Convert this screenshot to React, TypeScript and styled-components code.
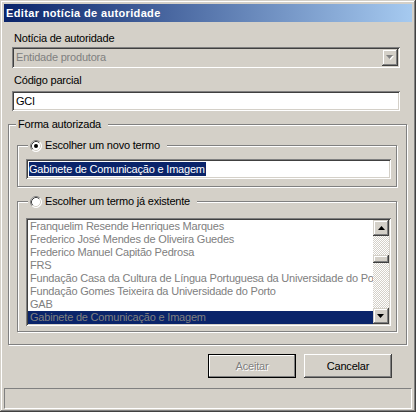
import React from "react";
import styled, { createGlobalStyle } from "styled-components";

const face = "#d4d0c8";
const light = "#ffffff";
const shadow = "#808080";
const dark = "#404040";
const navy = "#0a246a";

const GlobalStyle = createGlobalStyle`
  html, body { margin: 0; padding: 0; background: ${face}; }
  body { font-family: "Liberation Sans", Arial, sans-serif; font-size: 11px; letter-spacing: -0.2px; color: #000; }
  * { box-sizing: border-box; }
`;

const Window = styled.div`
  width: 416px;
  height: 412px;
  display: flex;
  flex-direction: column;
  padding: 4px 4px 3px 4px;
  background: ${face};
  box-shadow: inset -1px -1px ${dark}, inset 1px 1px ${face}, inset -2px -2px ${shadow}, inset 2px 2px ${light};
`;

const TitleBar = styled.div`
  height: 18px;
  flex: none;
  padding-left: 2px;
  background: linear-gradient(to right, ${navy}, #a6caf0);
  color: #fff;
  font-weight: bold;
  letter-spacing: 0.35px;
  line-height: 18px;
  white-space: nowrap;
`;

const Body = styled.div`
  flex: 1;
  display: flex;
  flex-direction: column;
  padding: 0 4px;
`;

const Label = styled.div<{ $top: number }>`
  margin: ${(p) => p.$top}px 0 0 6px;
  line-height: 13px;
  height: 13px;
  white-space: nowrap;
`;

const Sunken = styled.div<{ $top: number; $h: number; $bg: string }>`
  margin: ${(p) => p.$top}px 8px 0 4px;
  height: ${(p) => p.$h}px;
  background: ${(p) => p.$bg};
  padding: 2px;
  display: flex;
  align-items: stretch;
  box-shadow: inset 1px 1px ${shadow}, inset -1px -1px ${light}, inset 2px 2px ${dark}, inset -2px -2px ${face};
`;

const FieldText = styled.div<{ $disabled?: boolean }>`
  flex: 1;
  padding-left: 2px;
  line-height: 17px;
  color: ${(p) => (p.$disabled ? shadow : "#000")};
  white-space: nowrap;
  overflow: hidden;
`;

const Raised = styled.div`
  width: 16px;
  flex: none;
  background: ${face};
  display: flex;
  align-items: center;
  justify-content: center;
  box-shadow: inset -1px -1px ${dark}, inset 1px 1px ${face}, inset -2px -2px ${shadow}, inset 2px 2px ${light};
`;

const DropArrow = ({ disabled }: { disabled?: boolean }) => (
  <svg width="8" height="5" viewBox="0 0 8 5">
    {disabled && <path d="M1 1h7l-3.5 4z" fill={light} />}
    <path d="M0 0h7l-3.5 4z" fill={disabled ? shadow : "#000"} />
  </svg>
);

const UpArrow = () => (
  <svg width="7" height="4" viewBox="0 0 7 4">
    <path d="M3.5 0L7 4H0z" fill="#000" />
  </svg>
);

const GroupBox = styled.div<{ $top: number; $side: number; $pb: number }>`
  margin: ${(p) => p.$top}px ${(p) => p.$side + 1}px 0 ${(p) => p.$side}px;
  border: 1px solid ${shadow};
  box-shadow: inset 1px 1px ${light}, 1px 1px ${light};
  padding-bottom: ${(p) => p.$pb}px;
  display: flex;
  flex-direction: column;
`;

const Legend = styled.div<{ $left: number }>`
  align-self: flex-start;
  margin: -7px 0 0 ${(p) => p.$left}px;
  padding: 0 7px 0 2px;
  height: 13px;
  line-height: 13px;
  background: ${face};
  display: flex;
  align-items: center;
  gap: 3px;
  white-space: nowrap;
`;

const Inset = styled.div<{ $top: number; $h: number }>`
  margin: ${(p) => p.$top}px 5px 0 8px;
  height: ${(p) => p.$h}px;
  background: #fff;
  padding: 2px;
  display: flex;
  box-shadow: inset 1px 1px ${shadow}, inset -1px -1px ${light}, inset 2px 2px ${dark}, inset -2px -2px ${face};
`;

const Highlight = styled.span`
  align-self: center;
  margin-left: 1px;
  background: ${navy};
  color: #fff;
  line-height: 14px;
  padding-right: 1px;
  white-space: nowrap;
`;

const Items = styled.div`
  flex: 1;
  min-width: 0;
  overflow: hidden;
  display: flex;
  flex-direction: column;
`;

const Item = styled.div<{ $selected?: boolean }>`
  height: 13px;
  line-height: 13px;
  padding-left: 2px;
  white-space: nowrap;
  color: ${shadow};
  background: ${(p) => (p.$selected ? navy : "transparent")};
`;

const ScrollBar = styled.div`
  width: 16px;
  flex: none;
  display: flex;
  flex-direction: column;
`;

const ScrollButton = styled(Raised)`
  height: 16px;
`;

const Track = styled.div`
  flex: 1;
  background: repeating-conic-gradient(${light} 0% 25%, ${face} 0% 50%) 0 0 / 2px 2px;
`;

const Thumb = styled.div`
  height: 8px;
  background: ${face};
  box-shadow: inset -1px -1px ${dark}, inset 1px 1px ${face}, inset -2px -2px ${shadow}, inset 2px 2px ${light};
`;

const ButtonRow = styled.div`
  margin-top: 9px;
  padding-right: 16px;
  display: flex;
  justify-content: flex-end;
  gap: 8px;
`;

const Button = styled.div<{ $default?: boolean; $disabled?: boolean }>`
  width: 88px;
  height: 24px;
  display: flex;
  align-items: center;
  justify-content: center;
  background: ${face};
  border: ${(p) => (p.$default ? "1px solid #000" : "none")};
  box-shadow: ${(p) =>
    p.$default
      ? `inset -1px -1px ${shadow}, inset 1px 1px ${light}`
      : `inset -1px -1px ${dark}, inset 1px 1px ${light}, inset -2px -2px ${shadow}, inset 2px 2px ${face}`};
  color: ${(p) => (p.$disabled ? shadow : "#000")};
  text-shadow: ${(p) => (p.$disabled ? `1px 1px ${light}` : "none")};
`;

const StatusBar = styled.div`
  height: 21px;
  flex: none;
  border-top: 1px solid ${shadow};
  border-left: 1px solid ${shadow};
  border-bottom: 1px solid ${light};
  border-right: 1px solid ${light};
`;

const Radio = ({ checked }: { checked?: boolean }) => (
  <svg width="12" height="12" viewBox="0 0 12 12" style={{ flex: "none" }}>
    <circle cx="6" cy="6" r="5.5" fill="#fff" />
    <path d="M2.11 9.89A5.5 5.5 0 0 1 9.89 2.11" fill="none" stroke={shadow} />
    <path d="M9.89 2.11A5.5 5.5 0 0 1 2.11 9.89" fill="none" stroke={light} />
    <path d="M2.82 9.18A4.5 4.5 0 0 1 9.18 2.82" fill="none" stroke={dark} />
    <path d="M9.18 2.82A4.5 4.5 0 0 1 2.82 9.18" fill="none" stroke={face} />
    {checked && <circle cx="6" cy="6" r="2" fill="#000" />}
  </svg>
);

const entries = [
  "Franquelim Resende Henriques Marques",
  "Frederico José Mendes de Oliveira Guedes",
  "Frederico Manuel Capitão Pedrosa",
  "FRS",
  "Fundação Casa da Cultura de Língua Portuguesa da Universidade do Porto",
  "Fundação Gomes Teixeira da Universidade do Porto",
  "GAB",
  "Gabinete de Comunicação e Imagem",
];

export default function App() {
  const thumbOffset = 19;
  return (
    <>
      <GlobalStyle />
      <Window>
        <TitleBar>Editar notícia de autoridade</TitleBar>
        <Body>
          <Label $top={10}>Notícia de autoridade</Label>
          <Sunken $top={2} $h={21} $bg={face}>
            <FieldText $disabled>Entidade produtora</FieldText>
            <Raised>
              <DropArrow disabled />
            </Raised>
          </Sunken>
          <Label $top={6}>Código parcial</Label>
          <Sunken $top={4} $h={20} $bg="#fff">
            <FieldText>GCI</FieldText>
          </Sunken>
          <GroupBox $top={13} $side={0} $pb={12}>
            <Legend $left={7}>Forma autorizada</Legend>
            <GroupBox $top={14} $side={8} $pb={7}>
              <Legend $left={10}>
                <Radio checked />
                Escolher um novo termo
              </Legend>
              <Inset $top={7} $h={20}>
                <Highlight>Gabinete de Comunicação e Imagem</Highlight>
              </Inset>
            </GroupBox>
            <GroupBox $top={14} $side={8} $pb={5}>
              <Legend $left={10}>
                <Radio />
                Escolher um termo já existente
              </Legend>
              <Inset $top={10} $h={108}>
                <Items>
                  {entries.map((e, i) => (
                    <Item key={e} $selected={i === entries.length - 1}>
                      {e}
                    </Item>
                  ))}
                </Items>
                <ScrollBar>
                  <ScrollButton>
                    <UpArrow />
                  </ScrollButton>
                  <Track>
                    <Thumb style={{ marginTop: thumbOffset }} />
                  </Track>
                  <ScrollButton>
                    <DropArrow />
                  </ScrollButton>
                </ScrollBar>
              </Inset>
            </GroupBox>
          </GroupBox>
          <ButtonRow>
            <Button $default $disabled>
              Aceitar
            </Button>
            <Button>Cancelar</Button>
          </ButtonRow>
        </Body>
        <StatusBar />
      </Window>
    </>
  );
}
